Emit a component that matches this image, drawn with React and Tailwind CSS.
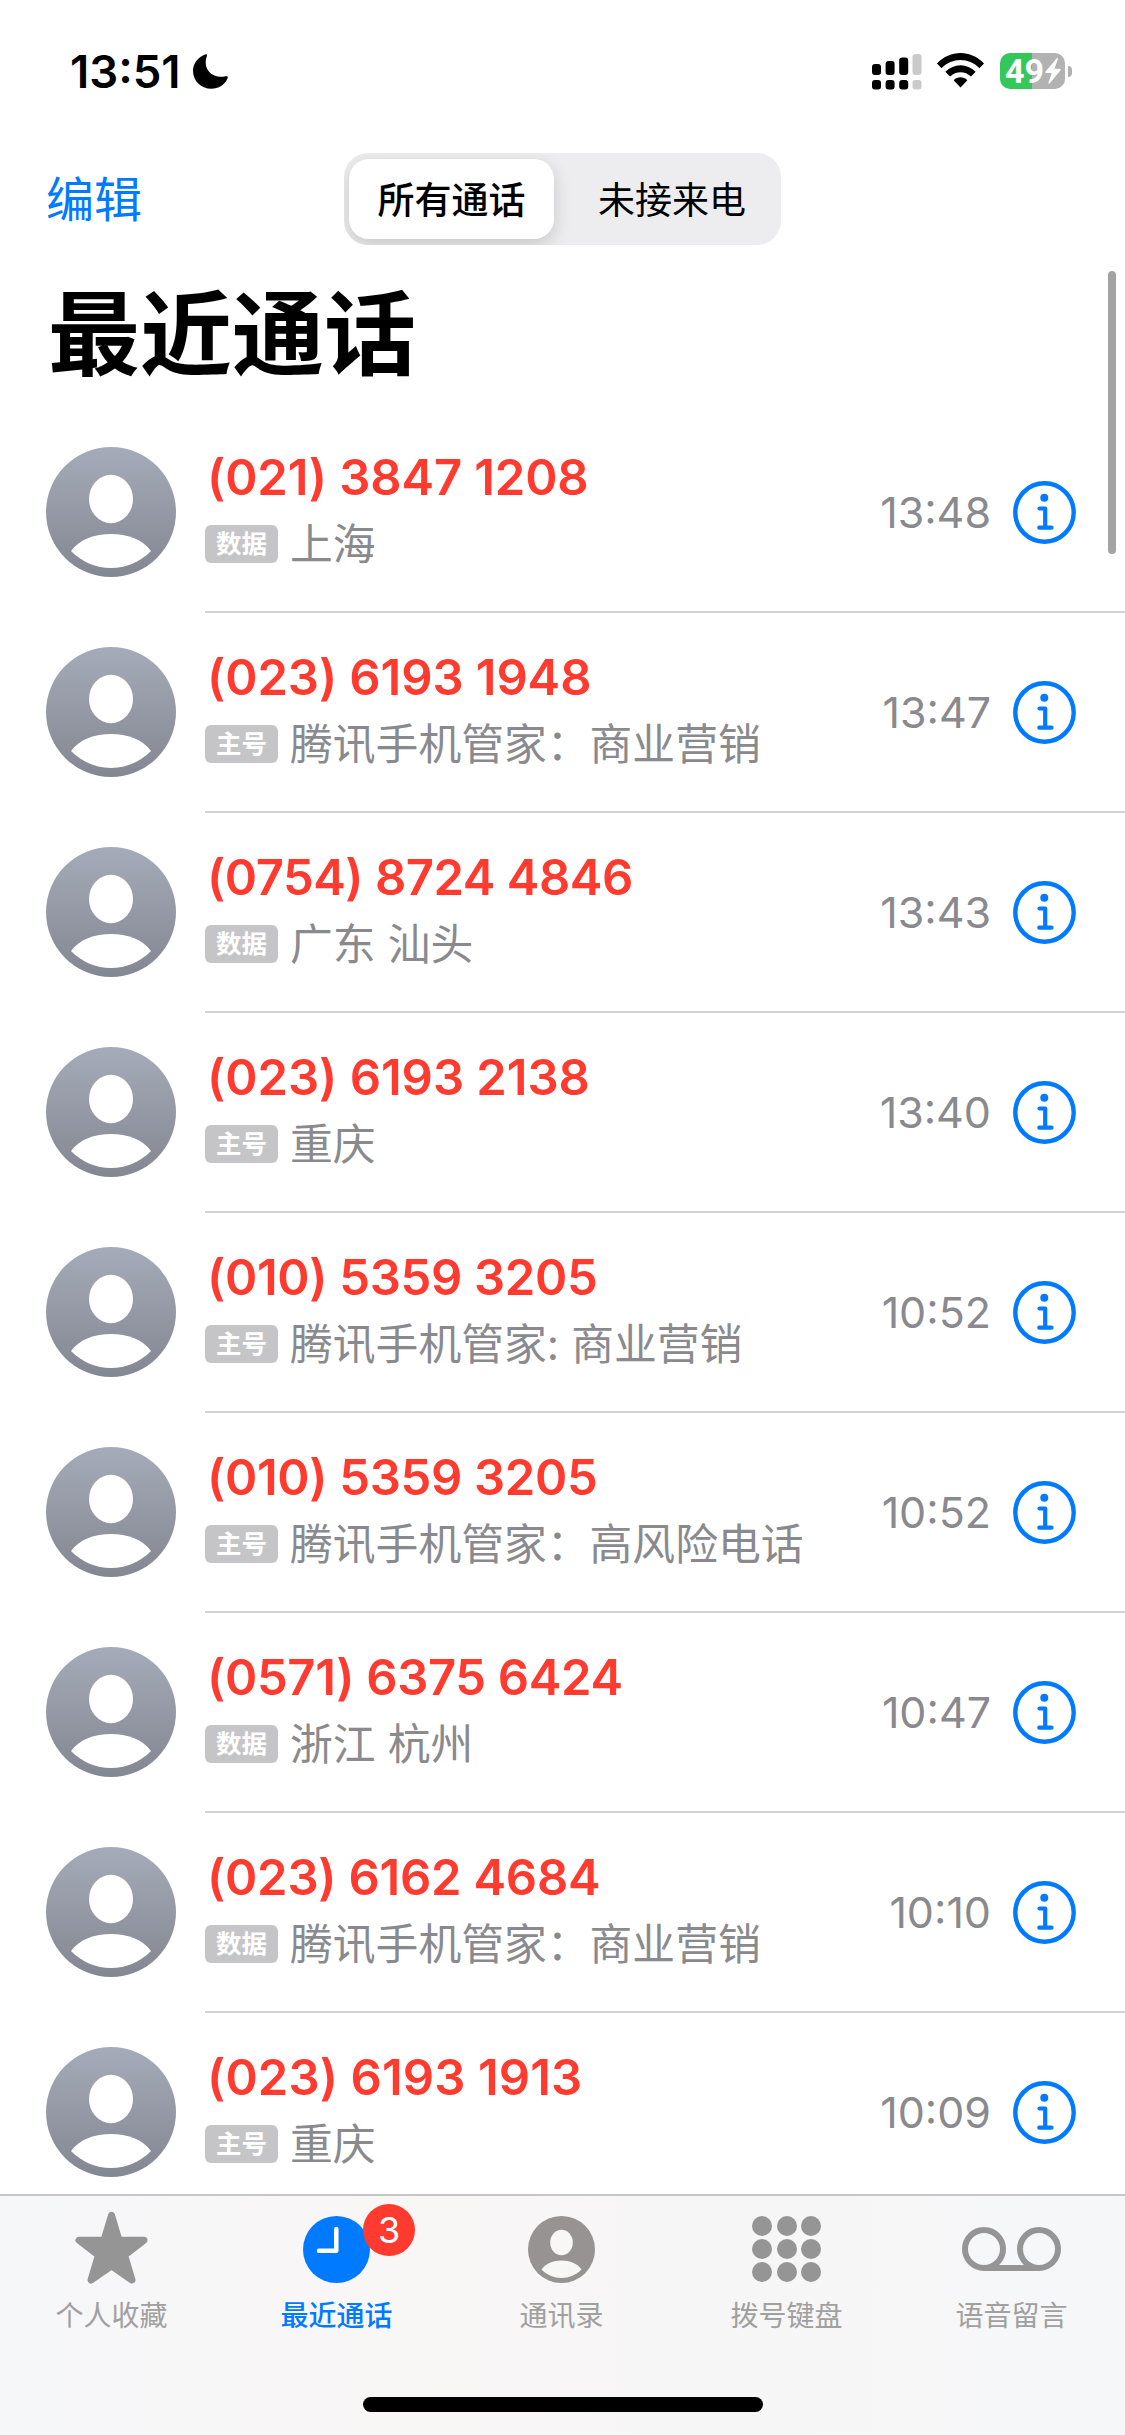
import { useState } from 'react';

const calls = [
  { number: '(021) 3847 1208', sim: '数据', place: '上海', time: '13:48', spacing: 'tracking-[-0.15px]' },
  { number: '(023) 6193 1948', sim: '主号', place: '腾讯手机管家：商业营销', time: '13:47', spacing: 'tracking-[-0.1px]' },
  { number: '(0754) 8724 4846', sim: '数据', place: '广东 汕头', time: '13:43', spacing: 'tracking-[-0.5px]' },
  { number: '(023) 6193 2138', sim: '主号', place: '重庆', time: '13:40', spacing: 'tracking-[-0.05px]' },
  { number: '(010) 5359 3205', sim: '主号', place: '腾讯手机管家: 商业营销', time: '10:52', spacing: 'tracking-[-0.35px]' },
  { number: '(010) 5359 3205', sim: '主号', place: '腾讯手机管家：高风险电话', time: '10:52', spacing: 'tracking-[-0.35px]' },
  { number: '(0571) 6375 6424', sim: '数据', place: '浙江 杭州', time: '10:47', spacing: 'tracking-[-0.35px]' },
  { number: '(023) 6162 4684', sim: '数据', place: '腾讯手机管家：商业营销', time: '10:10', spacing: 'tracking-[-0.25px]' },
  { number: '(023) 6193 1913', sim: '主号', place: '重庆', time: '10:09', spacing: 'tracking-[0.1px]' },
];

function Avatar() {
  return (
    <svg className="ml-[46px] size-[130px] shrink-0" viewBox="0 0 130 130">
      <defs>
        <linearGradient id="avatar" x1="0" y1="0" x2="0" y2="1">
          <stop offset="0" stopColor="#a6abb9" />
          <stop offset="1" stopColor="#838791" />
        </linearGradient>
      </defs>
      <circle cx="65" cy="65" r="65" fill="url(#avatar)" />
      <ellipse cx="65" cy="52" rx="22" ry="24.2" fill="#fff" />
      <path d="M25 104C34 92 49 87 65 87s31 5 40 17c-11 11-25 17-40 17s-29-6-40-17Z" fill="#fff" />
    </svg>
  );
}

function InfoIcon() {
  return (
    <svg className="ml-[22px] mr-[49px] size-[63px] shrink-0" viewBox="0 0 63 63" fill="none" stroke="#007aff">
      <circle cx="31.5" cy="31.5" r="29.2" strokeWidth="4.4" />
      <circle cx="31.3" cy="16.8" r="4" fill="#007aff" stroke="none" />
      <path d="M26.5 27.5h5.7v19M26.3 46.7h12.2" strokeWidth="4.2" strokeLinecap="round" strokeLinejoin="round" />
    </svg>
  );
}

function StatusBar() {
  return (
    <div className="flex h-[142px] items-start justify-between pl-[70px] pr-[53px] pt-[53px]">
      <div className="flex items-start">
        <span className="w-[123px] whitespace-nowrap text-[45.5px] font-semibold leading-[38px]">13:51</span>
        <svg className="mt-px h-[35px] w-[35px]" viewBox="0 0 35 35">
          <path d="M11.5.8C12.8-.2 14.6.2 13.8 2.2 9.5 14 18 25.5 32.5 22.3c1.9-.4 2.8.4 2 2.2C31.8 30.7 25.5 34.8 18.3 34.8 8 34.8 0 27 0 16.8 0 10 4.5 3.5 11.5.8Z" />
        </svg>
      </div>

      <div className="flex items-start">
        <svg className="h-[37px] w-[50px]" viewBox="0 0 50 37">
          <rect x="0" y="11" width="9" height="11" rx="3" />
          <rect x="13.6" y="8" width="9" height="14" rx="3" />
          <rect x="27.2" y="4.5" width="9" height="17.5" rx="3" />
          <rect x="40.5" y="1" width="9" height="21" rx="3" fill="#cacaca" />
          <rect x="0" y="27" width="9" height="9.5" rx="3" />
          <rect x="13.6" y="27" width="9" height="9.5" rx="3" />
          <rect x="27.2" y="27" width="9" height="9.5" rx="3" />
          <rect x="40.5" y="27" width="9" height="9.5" rx="3" fill="#cacaca" />
        </svg>
        <svg className="ml-[15px] h-[35px] w-[47px]" viewBox="0 0 47 35">
          <path d="M0 10.5C13-3.5 34-3.5 47 10.5l-4.6 4.7c-10.5-10.8-27.3-10.8-37.8 0Z" />
          <path d="M8.3 18.8c8.7-8.8 21.7-8.8 30.4 0l-4.7 4.7c-6-5.8-15-5.8-21 0Z" />
          <path d="M16.7 27.2c4-3.8 9.6-3.8 13.6 0L23.5 34.5Z" />
        </svg>
        <div className="ml-[16px] flex items-center">
          <div className="flex h-[36px] w-[65px] items-center rounded-[10px] bg-[linear-gradient(90deg,#34c759_50%,#b2b2b2_50%)] pl-[5px] text-white">
            <span className="w-[40px] whitespace-nowrap font-[Roboto,sans-serif] text-[34px] font-bold leading-[36px]">49</span>
            <svg className="h-[26px] w-[16px]" viewBox="0 0 16 26" fill="#fff">
              <path d="M11.5.5.6 13.5c-.6.8-.3 1.5.7 1.5h5.5L3.5 24.5c-.4 1.2.6 1.6 1.3.7L15.5 12.2c.6-.8.2-1.5-.7-1.5H9.5L12.8 1.2c.4-1.1-.6-1.5-1.3-.7Z" />
            </svg>
          </div>
          <div className="ml-[3px] h-[11px] w-[4px] rounded-r-full bg-[#b2b2b2]" />
        </div>
      </div>
    </div>
  );
}

function TabIcon({ name }) {
  if (name === 'star') {
    return (
      <svg className="mb-px h-[75px] w-[73px]" viewBox="0 0 73 75" fill="#959595" stroke="#959595" strokeWidth="7" strokeLinejoin="round">
        <path d="M36.5 4.3 44 29.3H69L49.6 44.2 57 69 36.5 54.8 16 69 23.4 44.2 4 29.3H29Z" />
      </svg>
    );
  }
  if (name === 'clock') {
    return (
      <svg className="h-[67px] w-[67px]" viewBox="0 0 67 67" fill="none">
        <circle cx="33.5" cy="33.5" r="33.5" fill="#007aff" />
        <path d="M33.3 13v21.8H16" stroke="#fff" strokeWidth="4.5" strokeLinecap="round" strokeLinejoin="round" />
      </svg>
    );
  }
  if (name === 'person') {
    return (
      <svg className="h-[67px] w-[67px]" viewBox="0 0 67 67">
        <circle cx="33.5" cy="33.5" r="33.5" fill="#969392" />
        <ellipse cx="33.5" cy="26.5" rx="11.3" ry="12.7" fill="#f9f6f6" />
        <path d="M13.5 53.5c4-6 12-9 20-9s16 3 20 9c-5.5 5.5-12.5 8.5-20 8.5s-14.5-3-20-8.5Z" fill="#f9f6f6" />
      </svg>
    );
  }
  if (name === 'keypad') {
    return (
      <div className="grid grid-cols-3 gap-x-[4.6px] gap-y-[3.2px]">
        {[...Array(9)].map((_, i) => (
          <span key={i} className="size-[20px] rounded-full bg-[#959595]" />
        ))}
      </div>
    );
  }
  return (
    <svg className="h-[44px] w-[99px]" viewBox="0 0 99 44" fill="none" stroke="#959595" strokeWidth="6">
      <circle cx="22" cy="22" r="19" />
      <circle cx="77" cy="22" r="19" />
      <path d="M22 41h55" />
    </svg>
  );
}

const tabs = [
  { icon: 'star', label: '个人收藏' },
  { icon: 'clock', label: '最近通话', badge: 3 },
  { icon: 'person', label: '通讯录' },
  { icon: 'keypad', label: '拨号键盘' },
  { icon: 'voicemail', label: '语音留言' },
];

export default function App() {
  const [filter, setFilter] = useState('all');
  const [active, setActive] = useState('clock');

  return (
    <div className="relative flex h-[2435px] w-[1125px] flex-col overflow-hidden bg-white font-[Inter,'Noto_Sans_CJK_SC',sans-serif] text-black">
      <StatusBar />

      {/* Nav */}
      <div className="relative flex h-[116px] items-center pb-px pl-[46px]">
        <button className="text-[48px] leading-[60px] text-[#007aff]">编辑</button>
        <div className="absolute left-[344px] top-[11px] flex h-[92px] w-[437px] overflow-hidden rounded-[24px] bg-[#ededef] py-[6px] pl-[5px]">
          <button
            onClick={() => setFilter('all')}
            className={`w-[205px] rounded-[20px] pt-[3px] text-[37px] leading-[77px] ${
              filter === 'all' ? 'bg-white font-medium shadow-[0_6px_18px_rgba(0,0,0,0.16)]' : ''
            }`}
          >
            所有通话
          </button>
          <button
            onClick={() => setFilter('missed')}
            className={`ml-[12px] w-[212px] rounded-[20px] pt-[3px] text-[37px] leading-[77px] ${
              filter === 'missed' ? 'bg-white font-medium shadow-[0_6px_18px_rgba(0,0,0,0.16)]' : ''
            }`}
          >
            未接来电
          </button>
        </div>
      </div>

      <h1 className="h-[155px] pl-[48px] pt-[17px] text-[92px] font-bold leading-[120px]">最近通话</h1>

      {/* Call list */}
      <div className="flex-1 overflow-hidden">
        {calls.map((call, i) => (
          <div key={i} className="flex h-[200px]">
            <div className="flex items-center pb-[2px]">
              <Avatar />
            </div>
            <div className="ml-[29px] flex flex-1 items-center border-b-2 border-[#d2d3d4]">
              <div className="flex-1 pb-[4px]">
                <p className={`whitespace-nowrap pl-[2px] text-[49px] font-semibold leading-[64px] text-[#ff3b30] ${call.spacing}`}>
                  {call.number}
                </p>
                <div className="mt-[3px] flex h-[62px] items-center">
                  <span className="flex h-[38px] w-[73px] items-center justify-center rounded-[6px] bg-[#c5c5c7] text-[25.5px] font-bold leading-none text-white">
                    {call.sim}
                  </span>
                  <span className="ml-[12px] whitespace-nowrap pt-[3px] text-[42.8px] leading-[62px] text-[#8a8a8e]">{call.place}</span>
                </div>
              </div>
              <span className="text-[43px] leading-[60px] text-[#8a8a8e]">{call.time}</span>
              <InfoIcon />
            </div>
          </div>
        ))}
      </div>

      {/* Scroll indicator */}
      <div className="absolute left-[1108px] top-[271px] h-[283px] w-[8px] rounded-full bg-[#a3a3a3]" />

      {/* Tab bar */}
      <div className="absolute inset-x-0 bottom-0 h-[241px] border-t-2 border-[#c6c6c8] bg-[linear-gradient(90deg,#f6f7f9,#f9f6f6_35%,#f7f6f6_60%,#f6f7f9)]">
        <div className="-ml-px mr-px grid grid-cols-5">
          {tabs.map((tab) => (
            <button key={tab.icon} onClick={() => setActive(tab.icon)} className="relative flex flex-col items-center">
              <span className="mt-[15px] flex h-[76px] items-center justify-center">
                <TabIcon name={tab.icon} />
              </span>
              {tab.badge && (
                <span className="absolute left-[139px] top-[8px] flex size-[52px] items-center justify-center rounded-full bg-[#ff3b30] text-[36px] leading-none text-white">
                  {tab.badge}
                </span>
              )}
              <span
                className={`mt-[9px] text-[28px] leading-[40px] ${
                  active === tab.icon ? 'font-medium text-[#007aff]' : 'text-[#a0a0a0]'
                }`}
              >
                {tab.label}
              </span>
            </button>
          ))}
        </div>
        <div className="mx-auto mt-[61px] h-[15px] w-[400px] rounded-full bg-black" />
      </div>
    </div>
  );
}
